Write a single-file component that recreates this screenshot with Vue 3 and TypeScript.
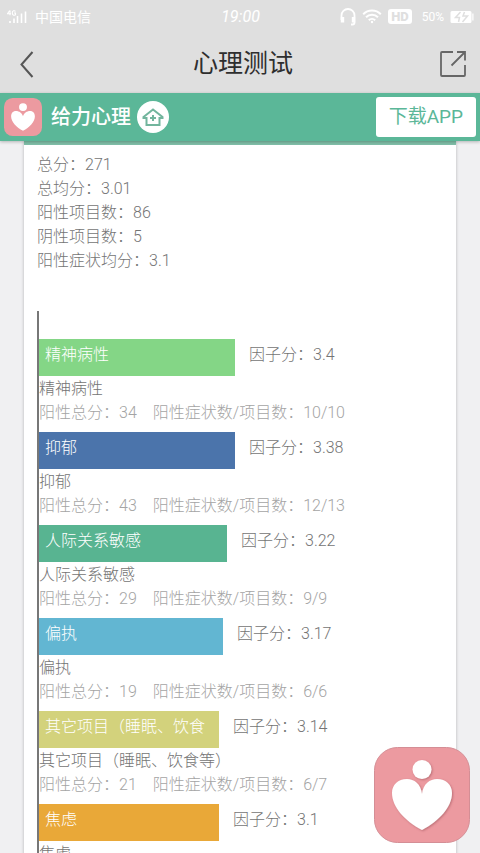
<script setup lang="ts">
interface Factor {
  name: string
  score: string
  width: number
  color: string
  total?: number
  counts?: string
}

// The bars have room for ten characters of a factor's name.
const LABEL_LIMIT = 10

const summary: { label: string; value: string }[] = [
  { label: '总分', value: '271' },
  { label: '总均分', value: '3.01' },
  { label: '阳性项目数', value: '86' },
  { label: '阴性项目数', value: '5' },
  { label: '阳性症状均分', value: '3.1' },
]

const factors: Factor[] = [
  { name: '精神病性', score: '3.4', width: 49, color: '#84d686', total: 34, counts: '10/10' },
  { name: '抑郁', score: '3.38', width: 49, color: '#4b74ab', total: 43, counts: '12/13' },
  { name: '人际关系敏感', score: '3.22', width: 47, color: '#58b491', total: 29, counts: '9/9' },
  { name: '偏执', score: '3.17', width: 46, color: '#62b6d2', total: 19, counts: '6/6' },
  { name: '其它项目（睡眠、饮食等）', score: '3.14', width: 45, color: '#d3d27c', total: 21, counts: '6/7' },
  { name: '焦虑', score: '3.1', width: 45, color: '#e9a838' },
]
</script>

<template>
  <div class="screen">
    <div class="status">
      <div class="carrier">
        <svg class="signal" width="20" height="14" viewBox="0 0 20 14" fill="none" stroke="#fff" aria-hidden="true">
          <path d="M2.7 .5 .5 3.8H4M3 .5V5.3M8.5 1.3C7.500 .3 5.300 .5 5.300 2.900s2.200 3 3.200 1.700V3H7" stroke-width="1.100" />
          <path d="M3 11v2M7 8.500V13M10.500 6v7M14.500 3.500V13M18.500 1.500V13" stroke-width="1.600" />
        </svg>
        <span>中国电信</span>
      </div>
      <span class="clock">19:00</span>
      <div class="indicators">
        <svg width="16" height="18" viewBox="0 0 16 18" fill="none" stroke="#fff" stroke-width="1.800" aria-hidden="true">
          <path d="M1.500 12V7.500a6.500 6.500 0 0 1 13 0V14.500q0 2-2 2H11" />
          <path d="M2.500 9v5.500M13.500 9v5.500" stroke-width="3.400" />
        </svg>
        <svg width="20" height="15" viewBox="0 0 20 15" fill="none" stroke="#fff" stroke-width="2" aria-hidden="true">
          <path d="M1.200 5.200a12.500 12.500 0 0 1 17.600 0M4 8.300a8.500 8.500 0 0 1 12 0M6.800 11.200a4.600 4.600 0 0 1 6.400 0" />
          <circle cx="10" cy="13" r="1.200" fill="#fff" stroke="none" />
        </svg>
        <span class="hd">HD</span>
        <span class="level">50%</span>
        <svg width="24" height="14" viewBox="0 0 24 14" aria-hidden="true">
          <path d="M2 1h18a1.500 1.500 0 0 1 1.500 1.500v9A1.500 1.500 0 0 1 20 13H2a1.500 1.500 0 0 1-1.500-1.500v-9A1.500 1.500 0 0 1 2 1zM22.300 3.500h1.200v7h-1.200z" fill="#fff" />
          <path d="M10.500 2 5.500 7.500h4L8.500 12M14.500 2l-1.500 4h4.500L12.500 12" fill="none" stroke="#dfdfdf" stroke-width="1.500" />
        </svg>
      </div>
    </div>

    <header class="titlebar">
      <button class="icon-button" type="button" aria-label="返回">
        <svg width="14" height="27" viewBox="0 0 14 27" fill="none" stroke="#555" stroke-width="2">
          <path d="M12.500 1 1.500 13.500 12.500 26" />
        </svg>
      </button>
      <h1>心理测试</h1>
      <button class="icon-button share" type="button" aria-label="分享">
        <svg width="26" height="26" viewBox="0 0 26 26" fill="none" stroke="#666" stroke-width="1.800">
          <path d="M13 1H2Q1 1 1 2v22Q1 25 2 25h22q1 0 1-1V14M11.500 14.500 24.500 1.500M17 1H25V9.500" />
        </svg>
      </button>
    </header>

    <div class="banner">
      <svg class="logo" viewBox="0 0 96 96" aria-hidden="true">
        <rect width="96" height="96" rx="22" fill="#ec9aa0" />
        <circle cx="48" cy="23" r="10" fill="#fff" />
        <path d="M48 46C45 31 18 25 18 47c0 14 14 28 30 36 16-8 30-22 30-36C78 25 51 31 48 46z" fill="#fff" />
      </svg>
      <span class="brand">给力心理</span>
      <a class="home" href="#" aria-label="首页">
        <svg width="22" height="18" viewBox="0 0 22 18" fill="none" stroke="#72b59d" stroke-width="2">
          <path d="M1.500 9 11 1.500 20.500 9v1H17.500v7h-13v-7H1.500zM11 7v6M8 10h6" />
        </svg>
      </a>
      <a class="download" href="#">下载APP</a>
    </div>

    <main class="content">
      <section class="card">
        <ul class="summary">
          <li v-for="row in summary" :key="row.label">{{ row.label }}：{{ row.value }}</li>
        </ul>
        <div class="chart">
          <article v-for="factor in factors" :key="factor.name" class="factor">
            <div class="row">
              <div class="bar" :style="{ width: factor.width + '%', background: factor.color }">
                {{ factor.name.slice(0, LABEL_LIMIT) }}
              </div>
              <span class="score">因子分：{{ factor.score }}</span>
            </div>
            <div>{{ factor.name }}</div>
            <div v-if="factor.counts" class="detail">
              <span>阳性总分：{{ factor.total }}</span>
              <span>阳性症状数/项目数：{{ factor.counts }}</span>
            </div>
          </article>
        </div>
      </section>
    </main>

    <a class="floating" href="#" aria-label="给力心理">
      <svg viewBox="0 0 96 96">
        <defs>
          <filter id="shade" x="-10%" y="-10%" width="120%" height="120%">
            <feDropShadow dx="1" dy="1" stdDeviation="1.200" flood-color="#8b4248" flood-opacity=".5" />
          </filter>
        </defs>
        <rect x=".5" y=".5" width="95" height="95" rx="23" fill="#ec9aa0" stroke="#d48e95" />
        <g fill="#fff" filter="url(#shade)">
          <circle cx="48" cy="22.500" r="9.500" />
          <path d="M48 47C47 37 40 32 33 32c-9 0-15 6-15 14 0 14 13 28 30 37 17-9 30-23 30-37 0-8-6-14-15-14-7 0-14 5-15 15z" />
        </g>
      </svg>
    </a>
  </div>
</template>

<style>
body {
  margin: 0;
  background: #f0f0f2;
}
</style>

<style scoped>
.screen {
  display: flex;
  flex-direction: column;
  height: 100vh;
  overflow: hidden;
  font-family: Roboto, "Noto Sans CJK SC", sans-serif;
  font-size: 16px;
  line-height: 24px;
  color: #747474;
  background: #f0f0f2;
}

.status {
  display: grid;
  grid-template-columns: 1fr auto 1fr;
  align-items: center;
  flex: none;
  height: 33px;
  padding: 0 6px 0 7px;
  background: #dfdfdf;
  color: #fff;
}

.carrier {
  display: flex;
  align-items: center;
  gap: 8px;
  font-size: 14px;
}

.clock {
  font-style: italic;
}

.indicators {
  display: flex;
  align-items: center;
  justify-content: flex-end;
  gap: 6px;
}

.hd {
  padding: 0 3px;
  border-radius: 3px;
  background: #fff;
  color: #dfdfdf;
  font-size: 13px;
  font-weight: 900;
  line-height: 15px;
}

.level {
  margin-left: 4px;
  font-size: 12px;
}

.titlebar {
  display: grid;
  grid-template-columns: 1fr auto 1fr;
  align-items: center;
  flex: none;
  height: 60px;
  padding: 2px 14px 0 20px;
  box-sizing: border-box;
  background: #dfdfdf;
}

.titlebar h1 {
  margin: 0;
  color: #2e2e2e;
  font-size: 25px;
  font-weight: 400;
  line-height: 32px;
}

.icon-button {
  display: flex;
  justify-self: start;
  padding: 0;
  border: 0;
  background: none;
}

.share {
  justify-self: end;
}

.banner {
  position: relative;
  display: flex;
  align-items: center;
  flex: none;
  height: 48px;
  padding: 0 4px;
  background: #5bb798;
  box-shadow: 0 1px 3px rgba(0, 0, 0, 0.25);
}

.logo {
  width: 38px;
  height: 38px;
}

.brand {
  margin: 0 6px 0 9px;
  color: #fff;
  font-size: 20px;
  font-weight: 500;
}

.home {
  display: flex;
  align-items: center;
  justify-content: center;
  width: 32px;
  height: 32px;
  border-radius: 50%;
  background: #fff;
}

.download {
  margin-left: auto;
  padding: 0 13px;
  border-radius: 3px;
  background: #fff;
  color: #5bb798;
  font-size: 19px;
  line-height: 40px;
  text-decoration: none;
}

.content {
  flex: 1;
  min-height: 0;
  overflow-y: auto;
  scrollbar-width: none;
  padding: 0 24px;
  font-weight: 300;
}

.card {
  padding: 8px 14px 0 13px;
  border-top: 4px solid #80bfa8;
  background: #fff;
  box-shadow: 0 0 3px rgba(0, 0, 0, 0.25);
}

.summary {
  margin: 0 0 38px;
  padding: 0;
  list-style: none;
}

.chart {
  padding: 28px 3px 0 0;
  border-left: 2px solid #777;
}

.factor {
  padding-bottom: 7px;
}

.row {
  display: flex;
  gap: 14px;
  height: 37px;
  margin-bottom: 1px;
}

.bar {
  box-sizing: border-box;
  padding: 4px 6px;
  color: #fff;
}

.score {
  padding-top: 4px;
}

.detail {
  display: flex;
  gap: 16px;
  color: #a4a4a4;
}

.floating {
  position: fixed;
  right: 10px;
  bottom: 10px;
  width: 96px;
  height: 96px;
}

.floating svg {
  display: block;
}
</style>
